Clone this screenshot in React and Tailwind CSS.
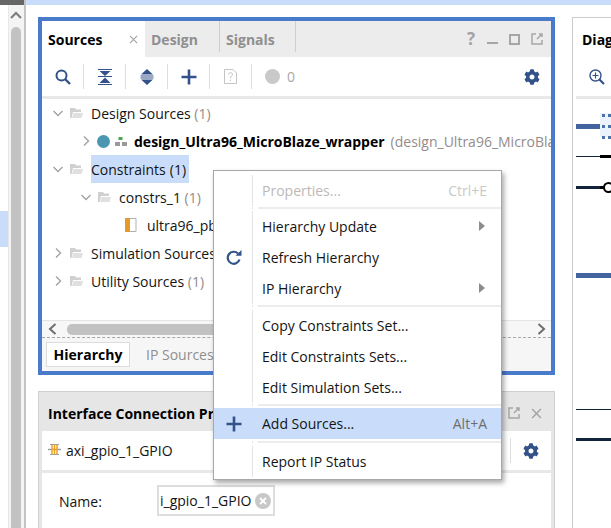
import React from 'react';
import { FaCog } from 'react-icons/fa';

const NAVY = '#34528a';

function Chevron({ open }) {
  return (
    <svg width="16" height="16" viewBox="0 0 16 16" className="shrink-0">
      <path
        d={open ? 'M3.5 6 L8 10.5 L12.5 6' : 'M6 3.5 L10.5 8 L6 12.5'}
        fill="none"
        stroke="#a3a3a3"
        strokeWidth="1.4"
      />
    </svg>
  );
}

function Folder() {
  return (
    <svg width="16" height="16" viewBox="0 0 16 16" className="shrink-0">
      <path d="M2 3 H7 L8 4.5 H13 V7 H5 L3.5 13 H2 Z" fill="#d0d0d0" />
      <path d="M5.5 8 H15 L13.5 13 H4 Z" fill="#e0e0e0" />
    </svg>
  );
}

function TreeRow({ pad, children }) {
  return <div className={`flex h-[28px] items-center whitespace-nowrap ${pad}`}>{children}</div>;
}

function FolderRow({ pad, open, label, count, selected }) {
  return (
    <TreeRow pad={pad}>
      <Chevron open={open} />
      <span className="ml-[2px] mr-[7px]">
        <Folder />
      </span>
      {selected ? (
        <span className="flex h-full items-center bg-[#c9ddfa] pr-[3px]">
          {label} <span className="ml-1">({count})</span>
        </span>
      ) : (
        <span>
          {label} <span className="text-[#948b8b]">({count})</span>
        </span>
      )}
    </TreeRow>
  );
}

function ToolCell({ children }) {
  return (
    <div className="flex h-[25px] w-[42px] items-center justify-center border-r border-[#dedede]">{children}</div>
  );
}

function Plus({ size = 16 }) {
  return (
    <svg width={size} height={size} viewBox="0 0 16 16">
      <path d="M0.5 8 H15.5 M8 0.5 V15.5" stroke={NAVY} strokeWidth="2.6" />
    </svg>
  );
}

function PopOut() {
  return (
    <svg width="12" height="12" viewBox="0 0 12 12">
      <path d="M5 1 H1 V11 H11 V7 M6 6 L11 1 M8 1 H11 V4" fill="none" stroke="#a6a6a6" strokeWidth="1.5" />
    </svg>
  );
}

function CloseX({ size = 10, color = '#a3a3a3' }) {
  return (
    <svg width={size} height={size} viewBox="0 0 10 10">
      <path d="M1 1 L9 9 M9 1 L1 9" stroke={color} strokeWidth="1.3" />
    </svg>
  );
}

function MenuItem({ icon, label, shortcut, arrow, disabled, active }) {
  return (
    <div className={`flex h-[31px] items-center ${active ? 'bg-[#c9ddfa]' : ''}`}>
      <div
        className={`flex h-full w-[39px] items-center justify-center pl-[1px] ${active ? '' : 'border-r border-[#e4e4e4]'}`}
      >
        {icon}
      </div>
      <span className={`ml-[9px] flex-1 ${disabled ? 'text-[#bdb8b8]' : 'text-[#141414]'}`}>{label}</span>
      {shortcut && (
        <span className={`mr-[14px] ${disabled ? 'text-[#c9c9c9]' : 'text-[#6e6e6e]'}`}>{shortcut}</span>
      )}
      {arrow && (
        <svg width="6" height="10" viewBox="0 0 6 10" className="mb-[2px] mr-[16px]">
          <path d="M0 0 L6 5 L0 10 Z" fill="#8c8c8c" />
        </svg>
      )}
    </div>
  );
}

function MenuSep({ top, bottom }) {
  return (
    <div className={`flex ${top} ${bottom}`}>
      <div className="w-[39px] border-r border-[#e4e4e4]" />
      <div className="ml-[5px] h-[2px] flex-1 bg-[#ececec]" />
    </div>
  );
}

export default function App() {
  return (
    <div
      className="relative flex h-[528px] w-[611px] overflow-hidden bg-white text-[14px] text-[#141414]"
      style={{ fontFamily: '"Open Sans", "Noto Sans", sans-serif' }}
    >
      {/* left edge with vertical scrollbar */}
      <div className="flex w-[26px] shrink-0 flex-col border-r-2 border-[#c4c4c4]">
        <div className="h-[5px] shrink-0 bg-[#666666]" />
        <div className="flex flex-1">
          <div className="w-[8px] shrink-0 pt-[206px]">
            <div className="h-[36px] bg-[#c9ddfa]" />
          </div>
          <div className="flex flex-1 flex-col items-center border-l border-[#e8e8e8] bg-[#f4f4f4] pr-[2px]">
            <svg width="12" height="8" viewBox="0 0 12 8" className="mt-[6px]">
              <path d="M1 7 L6 2 L11 7" fill="none" stroke="#7a7a7a" strokeWidth="2" />
            </svg>
            <div className="mt-[8px] w-[10px] flex-1 rounded-t-[5px] bg-[#c2c2c2]" />
          </div>
        </div>
      </div>

      <div className="flex flex-1 flex-col">
        <div className="h-[5px] shrink-0 bg-[#c9ddfa]" />
        <div className="flex flex-1 pl-[12px] pt-[12px]">
          <div className="flex w-[517px] shrink-0 flex-col gap-[16px]">
            {/* Sources panel */}
            <div className="flex h-[358px] shrink-0 flex-col border-4 border-[#4a7bcb]">
              <div className="flex h-[36px] shrink-0 bg-[#ececec]">
                <div className="flex w-[103px] items-center justify-between bg-white pl-[6px] pr-[7px] font-bold text-black">
                  Sources
                  <CloseX size={9} />
                </div>
                <div className="mb-[5px] flex w-[75px] items-center border-r border-[#cfcfcf] pl-[6px] pt-[5px] font-bold text-[#8f8f8f]">
                  Design
                </div>
                <div className="mb-[5px] flex w-[76px] items-center border-r border-[#cfcfcf] pl-[6px] pt-[5px] font-bold text-[#8f8f8f]">
                  Signals
                </div>
                <div className="flex flex-1 items-center justify-end pr-[8px]">
                  <span className="mr-[12px] text-[17px] font-bold text-[#a3a3a3]">?</span>
                  <div className="mr-[11px] mt-[8px] h-[2px] w-[11px] bg-[#a6a6a6]" />
                  <div className="mr-[11px] h-[11px] w-[11px] border-2 border-[#a6a6a6]" />
                  <PopOut />
                </div>
              </div>

              <div className="flex h-[39px] shrink-0 items-center pr-[11px]">
                <ToolCell>
                  <svg width="16" height="16" viewBox="0 0 16 16">
                    <circle cx="6.5" cy="6.5" r="5" fill="none" stroke={NAVY} strokeWidth="2" />
                    <path d="M10 10 L15 15" stroke={NAVY} strokeWidth="2.4" />
                  </svg>
                </ToolCell>
                <ToolCell>
                  <svg width="14" height="16" viewBox="0 0 14 16">
                    <path d="M0 0.5 H14 M0 15.5 H14 M0 7.5 H14" stroke={NAVY} strokeWidth="1.2" />
                    <path d="M1.5 2 H12.5 L7 7 Z M7 8.5 L12.5 14 H1.5 Z" fill={NAVY} />
                  </svg>
                </ToolCell>
                <ToolCell>
                  <svg width="14" height="16" viewBox="0 0 14 16">
                    <path d="M7 0 L13 5.5 H1 Z M1 10.5 H13 L7 16 Z" fill={NAVY} />
                    <path d="M0.5 7 H13.5 M0.5 9 H13.5" stroke={NAVY} strokeWidth="1.1" />
                  </svg>
                </ToolCell>
                <ToolCell>
                  <Plus />
                </ToolCell>
                <ToolCell>
                  <svg width="13" height="15" viewBox="0 0 13 15">
                    <path d="M0.5 0.5 H9 L12.5 4 V14.5 H0.5 Z" fill="none" stroke="#c4c4c4" />
                    <path d="M4.5 5.5 C4.5 3 8.5 3 8.5 5.5 C8.5 7 6.5 7 6.5 9 M6.5 10.5 V12" fill="none" stroke="#c4c4c4" />
                  </svg>
                </ToolCell>
                <div className="ml-[13px] h-[15px] w-[15px] rounded-full bg-[#c9c9c9]" />
                <span className="ml-[7px] text-[#a8a8a8]">0</span>
                <div className="flex-1" />
                <FaCog size={16} color={NAVY} />
              </div>
              <div className="h-[3px] shrink-0 bg-[#e8e8e8]" />

              <div className="flex-1 overflow-hidden">
                <FolderRow pad="pl-[8px]" open label="Design Sources" count={1} />
                <TreeRow pad="pl-[36px]">
                  <Chevron />
                  <div className="ml-[3px] mr-[5px] h-[13px] w-[13px] shrink-0 rounded-full bg-[#4b97b2]" />
                  <svg width="12" height="9" viewBox="0 0 12 9" className="mr-[7px] shrink-0">
                    <rect x="3.5" y="0" width="4" height="3" fill="#4da64d" />
                    <rect x="0" y="5" width="5" height="4" fill="#9a9a9a" />
                    <rect x="7" y="5" width="5" height="4" fill="#9a9a9a" />
                  </svg>
                  <span className="font-bold text-black">design_Ultra96_MicroBlaze_wrapper</span>
                  <span className="ml-[6px] text-[#948b8b]">(design_Ultra96_MicroBlaze_wrapper.bd)</span>
                </TreeRow>
                <FolderRow pad="pl-[8px]" open label="Constraints" count={1} selected />
                <FolderRow pad="pl-[36px]" open label="constrs_1" count={1} />
                <TreeRow pad="pl-[82px]">
                  <svg width="14" height="16" viewBox="0 0 14 16" className="mr-[9px] shrink-0">
                    <path d="M1.5 1.5 H12 V14.5 H1.5 Z" fill="white" stroke="#b0b0b0" />
                    <rect x="1" y="1" width="5" height="14" fill="#e69a2e" />
                  </svg>
                  ultra96_pblock.xdc
                </TreeRow>
                <FolderRow pad="pl-[8px]" label="Simulation Sources" count={1} />
                <FolderRow pad="pl-[8px]" label="Utility Sources" count={1} />
              </div>

              {/* horizontal scrollbar */}
              <div className="flex h-[17px] shrink-0 items-center border-t border-[#e4e4e4] bg-[#f7f7f7] px-[3px]">
                <svg width="9" height="12" viewBox="0 0 9 12" className="ml-[3px]">
                  <path d="M7.5 1 L2 6 L7.5 11" fill="none" stroke="#6e6e6e" strokeWidth="2" />
                </svg>
                <div className="ml-[10px] h-[11px] w-[220px] rounded-l-[5px] bg-[#c2c2c2]" />
                <div className="flex-1" />
                <svg width="9" height="12" viewBox="0 0 9 12" className="mr-[2px]">
                  <path d="M1.5 1 L7 6 L1.5 11" fill="none" stroke="#6e6e6e" strokeWidth="2" />
                </svg>
              </div>

              <div className="flex h-[34px] shrink-0 items-center border-t border-dashed border-[#a8a8a8] bg-[#f6f6f6] pl-[4px]">
                <div className="flex h-[25px] w-[84px] items-center justify-center border border-[#dcdcdc] bg-white font-bold text-black">
                  Hierarchy
                </div>
                <span className="ml-[16px] text-[#8f8f8f]">IP Sources</span>
              </div>
            </div>

            {/* Interface Connection Properties */}
            <div className="flex flex-1 flex-col border border-b-0 border-[#cfcfcf] bg-[#e6e6e6] pl-[3px] pr-[3px] pt-[1px]">
              <div className="flex h-[38px] shrink-0 items-center justify-between pl-[6px] pr-[9px] pt-[2px] font-bold text-black">
                Interface Connection Properties
                <div className="flex items-center gap-[11px]">
                  <PopOut />
                  <CloseX size={11} />
                </div>
              </div>
              <div className="flex h-[39px] shrink-0 items-center bg-white pl-[6px] pr-[12px]">
                <svg width="13" height="11" viewBox="0 0 13 11" className="mr-[5px] mt-[-3px] shrink-0">
                  <path d="M0 5.5 H13" stroke="#a0a0a0" strokeWidth="1.5" />
                  <path d="M2 0.5 H11 M2 10.5 H11" stroke="#a0a0a0" />
                  <path d="M4 1 V10 M6.5 1 V10 M9 1 V10" stroke="#f0a020" strokeWidth="1.5" />
                </svg>
                axi_gpio_1_GPIO
                <div className="flex-1" />
                <div className="mr-[12px] h-[25px] w-px bg-[#dedede]" />
                <FaCog size={16} color={NAVY} />
              </div>
              <div className="h-[3px] shrink-0 bg-[#e8e8e8]" />
              <div className="flex flex-1 items-start bg-white pl-[17px] pt-[12px]">
                <span className="mt-[6px] w-[98px]">Name:</span>
                <div className="flex h-[31px] w-[118px] items-center overflow-hidden border-2 border-[#dddddd] pl-[1px] pr-[2px]">
                  <span className="flex-1 overflow-hidden whitespace-nowrap">i_gpio_1_GPIO</span>
                  <svg width="16" height="16" viewBox="0 0 16 16" className="shrink-0">
                    <circle cx="8" cy="8" r="8" fill="#c8c8c8" />
                    <path d="M5 5 L11 11 M11 5 L5 11" stroke="white" strokeWidth="1.8" />
                  </svg>
                </div>
              </div>
            </div>
          </div>

          {/* Diagram panel, cut off by the window edge */}
          <div className="ml-[17px] flex flex-1 flex-col overflow-hidden border-l border-t border-[#cccccc] pl-[3px] pt-[3px]">
            <div className="flex h-[36px] shrink-0 items-center whitespace-nowrap pl-[6px] font-bold text-black">
              Diagram
            </div>
            <div className="flex h-[39px] shrink-0 items-center pl-[13px]">
              <svg width="16" height="16" viewBox="0 0 16 16" className="shrink-0">
                <circle cx="6.5" cy="6.5" r="5.5" fill="none" stroke={NAVY} strokeWidth="1.4" />
                <path d="M3.5 6.5 H9.5 M6.5 3.5 V9.5" stroke={NAVY} strokeWidth="1.2" />
                <path d="M10.5 10.5 L15 15" stroke={NAVY} strokeWidth="2.2" />
              </svg>
            </div>
            <div className="h-[3px] shrink-0 bg-[#e8e8e8]" />
            <div className="relative flex-1">
              <div className="absolute left-[24px] top-[14px] h-[24px] w-[12px] bg-[#ebf2fb]" />
              <div className="absolute left-0 top-[25px] h-[5px] w-[24px] bg-[#4464a0]" />
              <div className="absolute left-[26px] top-[15px] h-[3px] w-[3px] bg-[#4a72a8]" />
              <div className="absolute left-[32px] top-[15px] h-[3px] w-[3px] bg-[#4a72a8]" />
              <div className="absolute left-[26px] top-[26px] h-[3px] w-[3px] bg-[#4a72a8]" />
              <div className="absolute left-[32px] top-[26px] h-[3px] w-[3px] bg-[#4a72a8]" />
              <div className="absolute left-[26px] top-[37px] h-[3px] w-[3px] bg-[#4a72a8]" />
              <div className="absolute left-[32px] top-[37px] h-[3px] w-[3px] bg-[#4a72a8]" />
              <div className="absolute left-0 top-[57px] h-px w-[24px] bg-[#12233c]" />
              <div className="absolute left-[24px] top-[56px] h-[3px] w-[12px] bg-black" />
              <div className="absolute left-0 top-[87px] h-[3px] w-[24px] bg-[#12233c]" />
              <div className="absolute left-[24px] top-[87px] h-[3px] w-[4px] bg-black" />
              <div className="absolute left-[27px] top-[83px] h-[11px] w-[11px] rounded-full border-2 border-black" />
              <div className="absolute left-0 top-[174px] h-[5px] w-[36px] bg-[#4464a0]" />
              <div className="absolute left-0 top-[310px] h-px w-[36px] bg-[#12233c]" />
              <div className="absolute left-0 top-[339px] h-[3px] w-[36px] bg-[#12233c]" />
            </div>
          </div>
        </div>
      </div>

      {/* context menu */}
      <div className="absolute left-[213px] top-[170px] flex h-[310px] w-[289px] flex-col border border-[#a8a8a8] bg-white pt-[4px] shadow-[2px_3px_5px_rgba(0,0,0,0.35)]">
        <MenuItem label="Properties..." shortcut="Ctrl+E" disabled />
        <MenuSep top="pt-[1px]" bottom="pb-[2px]" />
        <MenuItem label="Hierarchy Update" arrow />
        <MenuItem
          label="Refresh Hierarchy"
          icon={
            <svg width="16" height="16" viewBox="0 0 16 16">
              <path d="M13.5 9.5 A6 6 0 1 1 12 3.5" fill="none" stroke={NAVY} strokeWidth="2.2" />
              <path d="M9.5 5.8 H15.5 V0 Z" fill={NAVY} />
            </svg>
          }
        />
        <MenuItem label="IP Hierarchy" arrow />
        <MenuSep top="pt-[1px]" bottom="pb-[3px]" />
        <MenuItem label="Copy Constraints Set..." />
        <MenuItem label="Edit Constraints Sets..." />
        <MenuItem label="Edit Simulation Sets..." />
        <MenuSep top="pt-[1px]" bottom="pb-[2px]" />
        <MenuItem label="Add Sources..." shortcut="Alt+A" active icon={<Plus />} />
        <MenuSep top="pt-[2px]" bottom="pb-[3px]" />
        <MenuItem label="Report IP Status" />
      </div>
    </div>
  );
}
